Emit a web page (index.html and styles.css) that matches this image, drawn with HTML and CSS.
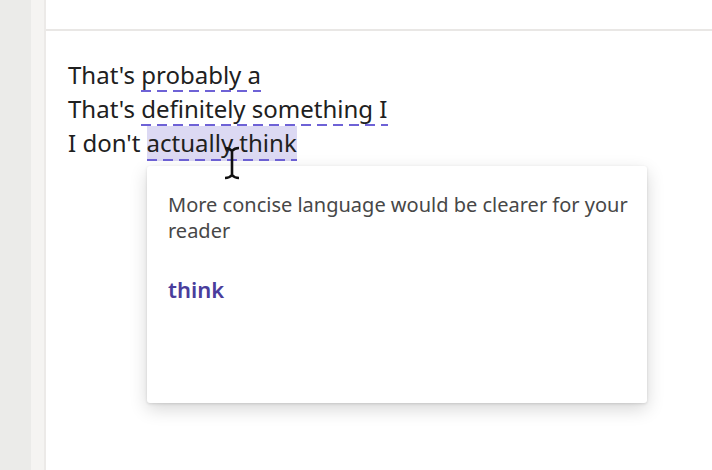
FILE: index.html
```html
<!DOCTYPE html>
<html lang="en">
<head>
    <meta charset="UTF-8">
    <meta name="viewport" content="width=device-width, initial-scale=1.0">
    <title>Editor – Conciseness</title>
    <link rel="stylesheet" href="styles.css">
</head>
<body>
    <div class="rail"></div>
    <div class="gutter"></div>
    <div class="main">
        <div class="top-card"></div>
        <div class="editor">
            <div class="line">That's <span class="flag">probably a</span></div>
            <div class="line">That's <span class="flag">definitely something I</span></div>
            <div class="line">I don't <span class="flag active">actually think</span></div>

            <div class="popover">
                <p class="hint">More concise language would be clearer for your reader</p>
                <div class="suggestion">think</div>
            </div>

            <svg class="ibeam" width="18" height="34" viewBox="0 0 18 34">
                <path d="M2 2 Q6.5 2 9 5 Q11.5 2 16 2 M9 5 V29 M2 32 Q6.5 32 9 29 Q11.5 32 16 32" fill="none" stroke="#111" stroke-width="2.6"/>
            </svg>
        </div>
    </div>
</body>
</html>
```

FILE: styles.css
```css
html, body {
    height: 100%;
}
body {
    margin: 0;
    display: flex;
    background-color: #fff;
    font-family: "Noto Sans", "Open Sans", sans-serif;
    color: #222;
    overflow: hidden;
}
.rail {
    width: 31px;
    background-color: #ebebe9;
}
.gutter {
    width: 13px;
    background-color: #f5f4f2;
    border-right: 2px solid #eceae8;
}
.main {
    flex: 1;
    display: flex;
    flex-direction: column;
}
.top-card {
    height: 29px;
    border-bottom: 2px solid #e9e7e5;
}
.editor {
    position: relative;
    flex: 1;
    padding: 27px 0 0 22px;
}
.line {
    font-size: 24px;
    line-height: 34px;
    height: 34px;
    color: #202020;
    white-space: nowrap;
}
.flag {
    padding-bottom: 1px;
    background: repeating-linear-gradient(to right, #6e62d6 0 10px, transparent 10px 16px) left bottom / 100% 2px no-repeat;
}
.flag.active {
    background:
        repeating-linear-gradient(to right, #6e62d6 0 10px, transparent 10px 16px) left bottom / 100% 2px no-repeat,
        #dcd9f3;
    padding-bottom: 2px;
}
.ibeam {
    position: absolute;
    left: 177px;
    top: 115px;
}
.popover {
    position: absolute;
    left: 101px;
    top: 135px;
    width: 471px;
    height: 211px;
    padding: 26px 8px 0 21px;
    background-color: #fff;
    border-radius: 3px;
    box-shadow: 0 6px 18px rgba(0, 0, 0, 0.16), 0 1px 3px rgba(0, 0, 0, 0.12);
}
.hint {
    margin: 0;
    font-size: 20px;
    line-height: 26px;
    color: #474747;
}
.suggestion {
    margin-top: 30px;
    font-size: 22px;
    line-height: 30px;
    font-weight: 600;
    color: #4a3d9c;
}
```
